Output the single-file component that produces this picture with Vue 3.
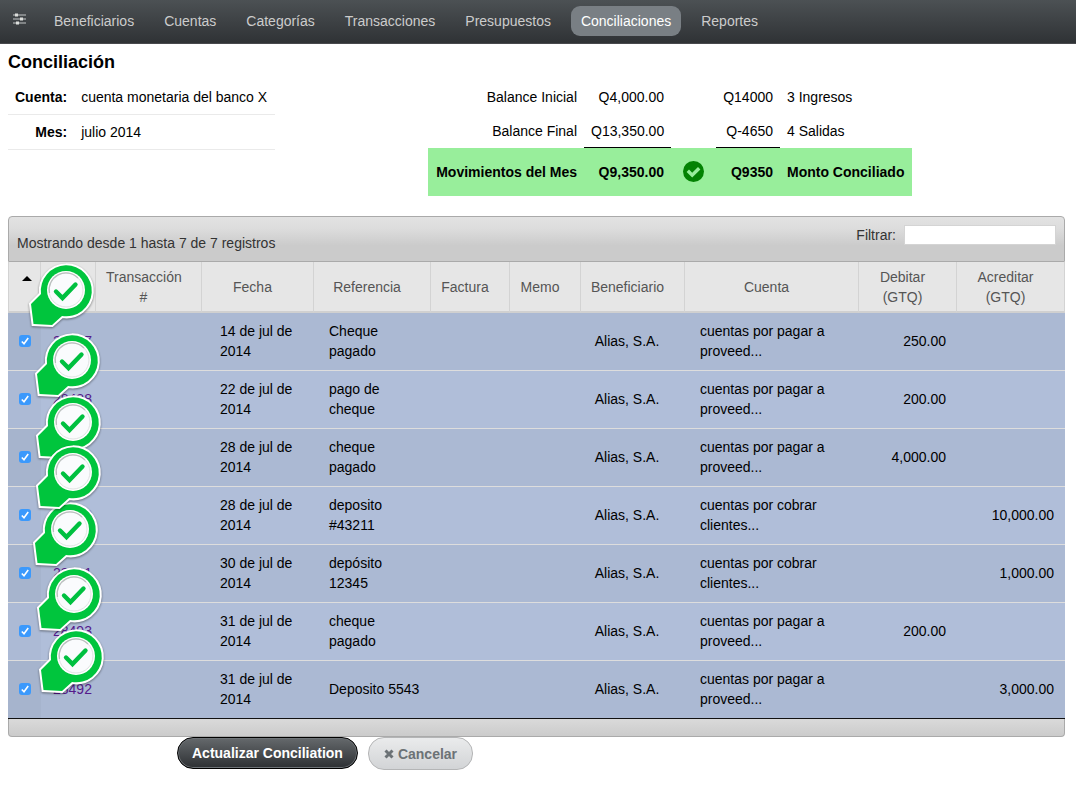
<script setup>
import { ref } from 'vue'

const menu = ['Beneficiarios', 'Cuentas', 'Categorías', 'Transacciones', 'Presupuestos', 'Conciliaciones', 'Reportes']
const active = 'Conciliaciones'
const filter = ref('')

const pay = 'cuentas por pagar a proveed...'
const charge = 'cuentas por cobrar clientes...'
const rows = ref([
  { id: '28487', date: '14 de jul de 2014', reference: 'Cheque pagado', account: pay, debit: '250.00', credit: '', checked: true },
  { id: '28488', date: '22 de jul de 2014', reference: 'pago de cheque', account: pay, debit: '200.00', credit: '', checked: true },
  { id: '28489', date: '28 de jul de 2014', reference: 'cheque pagado', account: pay, debit: '4,000.00', credit: '', checked: true },
  { id: '28490', date: '28 de jul de 2014', reference: 'deposito #43211', account: charge, debit: '', credit: '10,000.00', checked: true },
  { id: '28491', date: '30 de jul de 2014', reference: 'depósito 12345', account: charge, debit: '', credit: '1,000.00', checked: true },
  { id: '28493', date: '31 de jul de 2014', reference: 'cheque pagado', account: pay, debit: '200.00', credit: '', checked: true },
  { id: '28492', date: '31 de jul de 2014', reference: 'Deposito 5543', account: pay, debit: '', credit: '3,000.00', checked: true },
])

const stamps = [
  { x: 66, y: 290, z: 1 },
  { x: 72, y: 360, z: 2 },
  { x: 73, y: 422, z: 3 },
  { x: 73, y: 472, z: 5 },
  { x: 70, y: 529, z: 4 },
  { x: 74, y: 594, z: 6 },
  { x: 76, y: 656, z: 7 },
]
</script>

<template>
  <div class="page">
    <nav class="topbar">
      <button class="settings" type="button" aria-label="Ajustes">
        <svg width="14" height="12" viewBox="0 0 14 12">
          <path d="M1 2h13M1 6h13M1 10h13" stroke="#c4c7c8" stroke-width="1" />
          <path d="M3 .5h3v3H3zM8 4.500h3v3H8zM4 8.500h3v3H4z" fill="#dcdedb" />
        </svg>
      </button>
      <a v-for="item in menu" :key="item" href="#" class="tab" :class="{ current: item === active }">{{ item }}</a>
    </nav>

    <main class="content">
      <h1>Conciliación</h1>
      <section class="overview">
        <table class="info">
          <tbody>
            <tr><th scope="row">Cuenta:</th><td>cuenta monetaria del banco X</td></tr>
            <tr><th scope="row">Mes:</th><td>julio 2014</td></tr>
          </tbody>
        </table>
        <div class="summary-area">
          <table class="summary">
            <colgroup><col class="s-label"><col class="s-amount"><col class="s-icon"><col class="s-total"><col class="s-note"></colgroup>
            <tbody>
              <tr><td>Balance Inicial</td><td>Q4,000.00</td><td></td><td>Q14000</td><td class="note">3 Ingresos</td></tr>
              <tr><td>Balance Final</td><td class="sum">Q13,350.00</td><td></td><td class="sum">Q-4650</td><td class="note">4 Salidas</td></tr>
              <tr class="matched">
                <td>Movimientos del Mes</td><td>Q9,350.00</td>
                <td class="icon">
                  <svg width="22" height="22" viewBox="0 0 22 22">
                    <circle cx="10.500" cy="10.500" r="10.500" fill="#038203" />
                    <path d="M3.600 11L6 8.600l3.200 3.200L15 6l2.400 2.400-8.200 8.200z" fill="#98ee9b" />
                  </svg>
                </td>
                <td>Q9350</td><td class="note">Monto Conciliado</td>
              </tr>
            </tbody>
          </table>
        </div>
      </section>

      <section class="grid">
        <header class="toolbar">
          <span class="showing">Mostrando desde 1 hasta 7 de 7 registros</span>
          <label class="filter">Filtrar: <input v-model="filter" type="text"></label>
        </header>
        <table class="records">
          <colgroup>
            <col class="c-check"><col class="c-id"><col class="c-tx"><col class="c-date"><col class="c-ref"><col class="c-invoice"><col class="c-memo"><col class="c-payee"><col><col class="c-debit"><col class="c-credit">
          </colgroup>
          <thead>
            <tr>
              <th class="sorted"><svg width="10" height="5" viewBox="0 0 10 5"><path d="M0 5L5 0l5 5z" fill="#000" /></svg></th>
              <th>ID</th>
              <th>Transacción #</th>
              <th>Fecha</th>
              <th>Referencia</th>
              <th>Factura</th>
              <th>Memo</th>
              <th>Beneficiario</th>
              <th>Cuenta</th>
              <th>Debitar (GTQ)</th>
              <th>Acreditar (GTQ)</th>
            </tr>
          </thead>
          <tbody>
            <tr v-for="row in rows" :key="row.id">
              <td class="check">
                <label class="tick">
                  <input v-model="row.checked" type="checkbox" :aria-label="row.id">
                  <svg width="12" height="12" viewBox="0 0 12 12"><path d="M2.800 6.500l2.200 2.200L9.200 3" fill="none" stroke="#fff" stroke-width="1.600" /></svg>
                </label>
              </td>
              <td class="id"><a href="#">{{ row.id }}</a></td>
              <td></td>
              <td class="date">{{ row.date }}</td>
              <td class="reference">{{ row.reference }}</td>
              <td></td>
              <td></td>
              <td class="payee">Alias, S.A.</td>
              <td class="account">{{ row.account }}</td>
              <td class="amount">{{ row.debit }}</td>
              <td class="amount">{{ row.credit }}</td>
            </tr>
          </tbody>
        </table>
        <footer class="grid-foot"></footer>
      </section>

      <div class="actions">
        <button type="button" class="primary">Actualizar Conciliation</button>
        <button type="button" class="secondary">
          <svg width="10" height="10" viewBox="0 0 10 10"><path d="M1.500 1.500l7 7M8.500 1.500l-7 7" stroke="#6c7276" stroke-width="3" /></svg>
          Cancelar
        </button>
      </div>
    </main>

    <svg
      v-for="(s, i) in stamps" :key="i" class="stamp" width="80" height="80" viewBox="-44 -36 80 80"
      :style="{ left: s.x - 44 + 'px', top: s.y - 36 + 'px', zIndex: s.z }"
    >
      <path d="M-25 4L-35 14L-32.500 34L-14 35L-4 26A25.500 25.500 0 1 0 -25 4Z" fill="#fff" stroke="#fff" stroke-width="4" />
      <path d="M-25 4L-35 14L-32.500 34L-14 35L-4 26A25.500 25.500 0 1 0 -25 4Z" fill="#00c53d" />
      <circle r="19" fill="#fff" />
      <circle r="17" fill="#fafbfd" stroke="#dfe2e2" stroke-width="1" />
      <path d="M-16.500 3A16.800 16.800 0 0 1 12 -12" fill="none" stroke="#babfbe" stroke-width="1.200" />
      <path d="M-10 1.500L-3.500 8L9.500 -5.500" fill="none" stroke="#00c040" stroke-width="4.400" stroke-linecap="round" stroke-linejoin="miter" />
    </svg>
  </div>
</template>

<style>
body { background: #fff; }
</style>

<style scoped>
.page {
  position: relative;
  font: 14px/20px "Liberation Sans", Arial, Helvetica, sans-serif;
  color: #000;
}
.page * { box-sizing: border-box; }
button, input { font: inherit; }
table { border-collapse: separate; border-spacing: 0; }

.topbar {
  display: flex;
  align-items: center;
  gap: 10px;
  height: 44px;
  padding: 0 12px 2px;
  background: linear-gradient(#4c5154, #2f3235);
  border-bottom: 1px solid #48494d;
}
.settings {
  display: flex;
  width: 22px;
  height: 16px;
  padding: 0;
  border: 0;
  background: none;
}
.tab {
  padding: 5px 10px;
  border-radius: 9px;
  color: #ccc;
  text-decoration: none;
}
.tab.current { background: #797f84; color: #fff; }

.content { padding: 0 11px 0 8px; }
h1 { margin: 0; padding: 7px 0 9px; font-size: 18px; line-height: 22px; }
.overview { display: flex; align-items: flex-start; padding: 0 0 20px; }
.info { width: 267px; margin-top: -2px; }
.info th, .info td { height: 35px; padding: 0 7px; border-bottom: 1px solid #eaeaea; text-align: left; }
.info th { width: 66px; text-align: right; }
.summary-area { flex: 1; display: flex; justify-content: center; margin-top: -2px; }
.summary { table-layout: fixed; width: 484px; }
.s-label { width: 156px; }
.s-amount { width: 87px; }
.s-icon { width: 45px; }
.s-total { width: 64px; }
.summary td { height: 34px; padding: 0 7px; text-align: right; white-space: nowrap; }
.summary td.note { text-align: left; }
.summary td.sum { border-bottom: 1px solid #000; }
.summary .matched td { height: 48px; background: #98ee9b; font-weight: bold; }
.summary td.icon { text-align: center; }
.icon svg { display: block; margin: auto; }

.toolbar {
  display: flex;
  justify-content: space-between;
  height: 46px;
  padding: 8px 8px 0;
  border: 1px solid #aaa;
  border-radius: 4px 4px 0 0;
  background: linear-gradient(#e2e2e2 0%, #ddd 25%, #cbcbcb 65%, #cbcbcb 100%);
  color: #333;
}
.showing { padding-top: 8px; }
.filter { display: flex; gap: 8px; }
.filter input { width: 152px; height: 20px; padding: 0 4px; border: 1px solid #d4d4d4; background: #fff; }
.records { width: 100%; table-layout: fixed; }
.c-check { width: 33px; }
.c-id { width: 55px; }
.c-tx { width: 106px; }
.c-date { width: 112px; }
.c-ref { width: 117px; }
.c-invoice { width: 79px; }
.c-memo { width: 71px; }
.c-payee { width: 104px; }
.c-debit { width: 98px; }
.c-credit { width: 108px; }
.records th {
  height: 51px;
  padding: 4px 20px 4px 10px;
  border-right: 1px solid #d3d3d3;
  border-bottom: 2px solid #d0d0d0;
  background: #e6e6e6;
  color: #555;
  font-weight: normal;
}
.records th:nth-child(7), .records th:nth-child(6), .records th:nth-child(8) { padding-right: 16px; padding-left: 6px; }
.records th.sorted { padding: 0 0 22px 5px; border-left: 1px solid #d3d3d3; }
.records td { height: 58px; padding: 0 10px 2px; border-bottom: 1px solid #ddd; background: #b0bed9; }
.records tr:nth-child(odd) td { background: #abb9d3; }
.records tbody td.check { padding: 0 0 2px; background: #a6b4cd; }
.records tbody tr:nth-child(even) td.check { background: #acbad5; }
.records tbody tr:last-child td { border-bottom: 1px solid #111; }
.tick { position: relative; display: block; width: 12px; height: 12px; margin: 0 auto; }
.tick input { display: block; appearance: none; width: 12px; height: 12px; margin: 0; border-radius: 3px; background: #a8c8ee; }
.tick input:checked { background: #3b99fc; }
.tick svg { position: absolute; inset: 0; }
.tick input:not(:checked) + svg { display: none; }
.records td.id a { color: #551a8b; text-decoration: none; }
.records td.id { padding: 0 4px 2px 12px; }
.records td.date { padding-left: 18px; }
.records td.reference { padding: 0 10px 2px 15px; }
.records td.payee { padding: 0 12px 2px 0; text-align: center; }
.records td.account { padding-left: 15px; padding-right: 20px; }
.records td.amount { padding-right: 11px; text-align: right; }
.grid-foot {
  height: 18px;
  border: 1px solid #aaa;
  border-top: 0;
  border-radius: 0 0 4px 4px;
  background: linear-gradient(#dadada, #cbcbcb);
}

.actions { display: flex; align-items: flex-start; gap: 10px; padding-left: 169px; }
.actions button { height: 32px; border-radius: 16px; font-weight: bold; white-space: nowrap; }
.primary {
  padding: 0 14px;
  border: 1px solid #000;
  background: linear-gradient(#65696c, #2d3033);
  box-shadow: inset 0 0 0 1px #6e7377;
  color: #fff;
}
.actions .secondary {
  display: flex;
  align-items: center;
  gap: 4px;
  height: 33px;
  padding: 1px 15px 0;
  border: 1px solid #b4b5b6;
  background: linear-gradient(#eaebec, #d2d4d6);
  color: #6c7276;
}
.stamp { position: absolute; pointer-events: none; filter: drop-shadow(0 1px 1px rgba(0, 0, 0, .45)); }
</style>
